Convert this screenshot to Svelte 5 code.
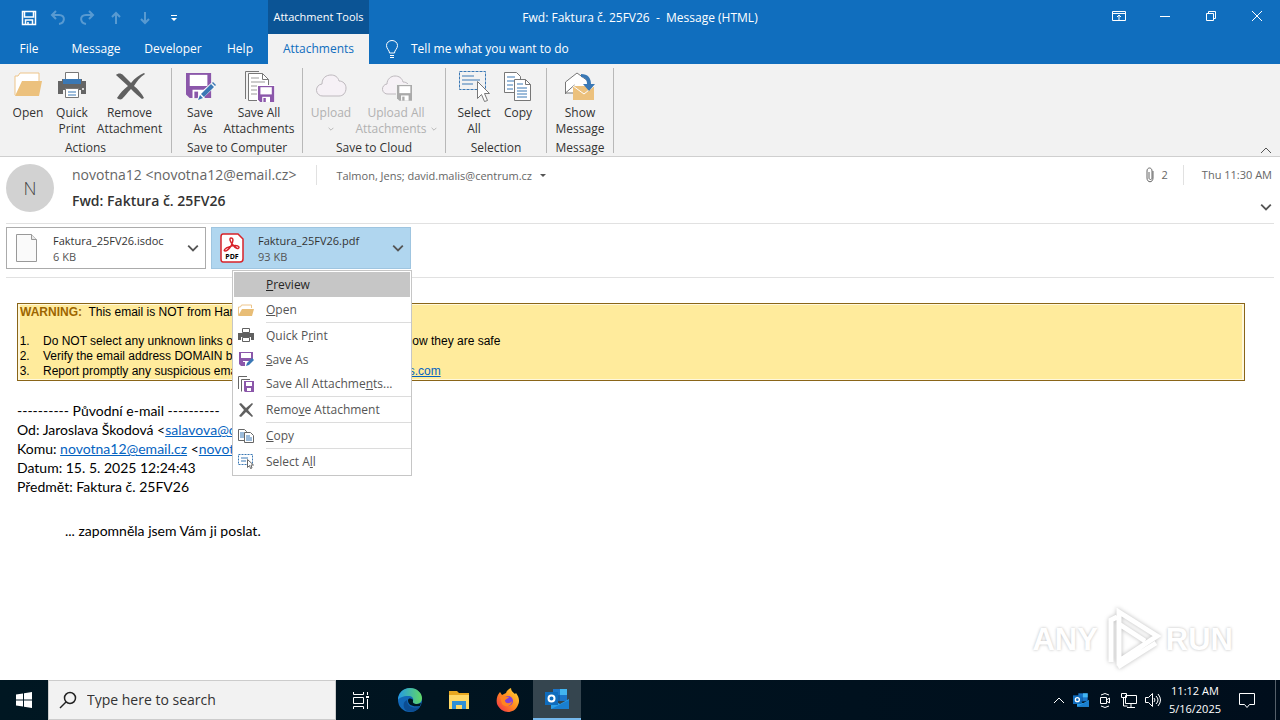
<script>
  const tabs = [
    { name: 'File', size: 'w58' },
    { name: 'Message', size: 'w76' },
    { name: 'Developer', size: 'w78' },
    { name: 'Help', size: 'w56' }
  ];

  const groups = [
    {
      title: 'Actions',
      buttons: [
        { icon: 'open', lines: ['Open'] },
        { icon: 'print', lines: ['Quick', 'Print'] },
        { icon: 'remove', lines: ['Remove', 'Attachment'], size: 'w71' }
      ]
    },
    {
      title: 'Save to Computer',
      buttons: [
        { icon: 'saveas', lines: ['Save', 'As'] },
        { icon: 'saveall', lines: ['Save All', 'Attachments'], size: 'w74' }
      ]
    },
    {
      title: 'Save to Cloud',
      buttons: [
        { icon: 'cloud', lines: ['Upload', ''], disabled: true },
        { icon: 'cloudall', lines: ['Upload All', 'Attachments '], size: 'w86', disabled: true }
      ]
    },
    {
      title: 'Selection',
      buttons: [
        { icon: 'select', lines: ['Select', 'All'] },
        { icon: 'copy', lines: ['Copy'] }
      ]
    },
    {
      title: 'Message',
      buttons: [{ icon: 'message', lines: ['Show', 'Message'], size: 'w54' }]
    }
  ];

  // label is split as [before, access key, after]
  const menu = [
    { label: ['', 'P', 'review'], active: true },
    { icon: 'open', label: ['', 'O', 'pen'], line: true },
    { icon: 'print', label: ['Quick P', 'r', 'int'] },
    { icon: 'saveas', label: ['', 'S', 'ave As'] },
    { icon: 'saveall', label: ['Save All Attachme', 'n', 'ts...'], line: true },
    { icon: 'remove', label: ['Remo', 'v', 'e Attachment'], line: true },
    { icon: 'copy', label: ['', 'C', 'opy'], line: true },
    { icon: 'select', label: ['Select A', 'l', 'l'] }
  ];

  let menuOpen = $state(true);
  let search = $state('');
</script>

{#snippet chevron(size)}
  <svg class={size} viewBox="0 0 10 10" aria-hidden="true">
    <path d="M1 3l4 4 4-4" fill="none" stroke="currentColor" stroke-width="1.5" />
  </svg>
{/snippet}

{#snippet floppy(fill)}
  <path d="M0 0h27v27H4l-4-4z" {fill} />
  <path d="M4 2h19v12H4z" fill="#fff" />
  <path d="M7 18h13v9H7z" fill="#fff" />
  <path d="M9 20h4v7H9z" {fill} />
{/snippet}

{#snippet icon(name)}
  <svg class="icon" viewBox="0 0 32 32" aria-hidden="true">
    {#if name === 'open'}
      <path d="M3 25V6h3l2-3h19v8" fill="#fff" stroke="#eec58a" />
      <path d="M3 26l7-15h20l-3 15z" fill="#ecc17d" />
    {:else if name === 'print'}
      <path d="M2 11h4V9h20v2h4v13h-5v-4H7v4H2z" fill="#656565" />
      <path d="M9.500 2.500h13v8h-13z" fill="#fff" stroke="#777" />
      <path d="M7 9h18v5H7z" fill="#3a78b5" />
      <path d="M9.500 18.500h13v9h-13z" fill="#fff" stroke="#777" />
      <path d="M12 22h8M12 25h8" stroke="#3a78b5" />
      <circle cx="27" cy="19" r="1" fill="#fff" />
    {:else if name === 'remove'}
      <path
        d="M2 5c2-2 5-2 7 0l8 8c4-5 8-8 13-10l1 1c-5 3-8 7-11 12 4 3 8 8 10 12l-2 1c-4-3-8-7-11-10-4 4-6 7-9 10-2 1-4 0-5-1 3-5 7-9 11-12-4-4-8-7-12-11z"
        fill="#606060"
      />
    {:else if name === 'saveas'}
      <g transform="translate(2 3) scale(0.930)">{@render floppy('#8b57aa')}</g>
      <path d="M13 30l2-6 12-11 4 4-12 11z" fill="#fff" />
      <path d="M14 30l2-5 3 3z" fill="#3a78b5" />
      <path d="M17 24l10-10 3 3-10 10z" fill="#3a78b5" />
      <path d="M28 13l1-1 3 3-1 1z" fill="#3a78b5" />
    {:else if name === 'saveall'}
      <path d="M2.500 29V1.500H16" fill="none" stroke="#777" />
      <path d="M5.500 30.500v-27h14l6 6v21z" fill="#fff" stroke="#777" />
      <path d="M19.500 3.500v6h6" fill="none" stroke="#777" />
      <path d="M8 8h8M8 12h14M8 16h8M8 20h6M8 24h6" stroke="#999" />
      <path d="M14 15h18v17H14z" fill="#fff" />
      <g transform="translate(15 16) scale(0.600)">{@render floppy('#8b57aa')}</g>
    {:else if name === 'cloud'}
      <path
        d="M8 26a6 6 0 0 1-1-12c0-6 4-9 9-9 4 0 7 2 8 6 4 0 7 3 7 7 0 5-3 8-7 8z"
        fill="#f6f1f6"
        stroke="#beb9be"
      />
    {:else if name === 'cloudall'}
      <path
        d="M8 24a5 5 0 0 1-1-10c0-5 4-8 8-8s7 2 8 6c4 0 7 3 7 7v5z"
        fill="#f6f1f6"
        stroke="#beb9be"
      />
      <path d="M16 14h17v18H16z" fill="#f2f2f2" />
      <g transform="translate(17 15) scale(0.580)">{@render floppy('#aaa')}</g>
    {:else if name === 'select'}
      <path d="M1.500 1.500h26v18h-26z" fill="none" stroke="#3a78b5" stroke-dasharray="3 1" />
      <path d="M4 6h12M4 10h18M4 14h11" stroke="#3a78b5" />
      <path d="M19.500 11.500v17l4-4 3 7 3-1-3-7h5z" fill="#fff" stroke="#777" />
    {:else if name === 'copy'}
      <path d="M2.500 2.500h12l4 4v16h-16z" fill="#fff" stroke="#777" />
      <path d="M5 7h8M5 11h8M5 15h6M5 19h6" stroke="#3a78b5" />
      <path d="M12.500 9.500h11l5 5v16h-16z" fill="#fff" stroke="#777" />
      <path d="M23.500 9.500v5h5" fill="none" stroke="#777" />
      <path d="M15 14h6M15 18h10M15 21h10M15 24h10M15 27h10" stroke="#3a78b5" />
    {:else if name === 'message'}
      <path d="M1.500 24V12L13 3l11 8v12H1.500l9-8" fill="#fff" stroke="#777" />
      <path d="M9 16h21v14H9z" fill="#ecc17d" />
      <path d="M9 16l11 8 10-8" fill="none" stroke="#fff" />
      <path d="M17 4c7 0 10 4 10 10h4l-6 7-6-7h4c0-4-2-7-6-7z" fill="#3a78b5" />
    {/if}
  </svg>
{/snippet}

{#snippet menuIcon(name)}
  <svg class="s16" viewBox="0 0 16 16" aria-hidden="true">
    {#if name === 'open'}
      <path d="M.5 13V5h2l1-2h10v3" fill="#fff" stroke="#eec58a" />
      <path d="M0 14l4-7h12l-2 7z" fill="#e8bd76" />
    {:else if name === 'print'}
      <path d="M0 6h16v7h-3v-3H3v3H0z" fill="#606060" />
      <path d="M4.500 1.500h7v4h-7zM4.500 10.500h7v4h-7z" fill="#fff" stroke="#606060" />
    {:else if name === 'saveas'}
      <path d="M1 1h14v14H3l-2-2z" fill="#8b57aa" />
      <path d="M3 2h10v5H3zM5 10h10v6H5z" fill="#fff" />
      <path d="M5 11h2v4H5z" fill="#8b57aa" />
      <path d="M8 15l1-3 5-5 2 2-5 5z" fill="#3a78b5" />
    {:else if name === 'saveall'}
      <path d="M.5 13V.5H9M3.500 15.500v-12H12" fill="none" stroke="#666" />
      <path d="M6 5h10v11H7l-1-1z" fill="#8b57aa" />
      <path d="M8 6h6v4H8zM9 12h4v3H9z" fill="#fff" />
    {:else if name === 'remove'}
      <path d="M1 2l2-1 5 5 6-5 1 1-5 6 5 6-1 1-6-5-5 5-2-1 5-6z" fill="#606060" />
    {:else if name === 'copy'}
      <path d="M.5 1.500h6l2 2v9h-8z" fill="#fff" stroke="#666" />
      <path d="M2 5h4M2 7h4M2 9h4" stroke="#3a78b5" />
      <path d="M6.500 4.500h6l3 3v7h-9z" fill="#fff" stroke="#666" />
      <path d="M8 8h4M8 10h6M8 12h6" stroke="#3a78b5" />
    {:else if name === 'select'}
      <path d="M.5 1.500h14v10H.5z" fill="none" stroke="#3a78b5" stroke-dasharray="2 1" />
      <path d="M3 5h7M3 8h5" stroke="#3a78b5" />
      <path d="M9.500 6.500v8l2-2 1 3 1.500-.5-1-3h2.500z" fill="#fff" stroke="#666" />
    {/if}
  </svg>
{/snippet}

{#snippet outlook(size)}
  <svg class={size} viewBox="0 0 24 24" aria-hidden="true">
    <path d="M8 2h14v12H8z" fill="#1b75c9" />
    <path d="M15 2h7v6h-7z" fill="#42b5f0" />
    <path d="M8 8h7v6H8z" fill="#1560a8" />
    <path d="M6 12l9 5 9-5v10H6z" fill="#2c9fe6" />
    <path d="M6 22l18-9v9z" fill="#1a7fd0" />
    <path d="M0 5h13v13H0z" fill="#0f6cbd" />
    <circle cx="6.500" cy="11.500" r="3" fill="none" stroke="#fff" stroke-width="2" />
  </svg>
{/snippet}

<div class="window">
  <header class="titlebar">
    <div class="quick">
      <button aria-label="Save">
        <svg class="s16" viewBox="0 0 16 16">
          <path d="M1.500 1.500h13v13h-13z M3.500 2v5h9V2 M4.500 14v-4h7v4 M7 12v2" fill="none" stroke="#fff" stroke-width="1.500" />
        </svg>
      </button>
      <button class="dim" aria-label="Undo">
        <svg class="s16" viewBox="0 0 16 16"><path d="M6 1L2 5l4 4M2 5h7c7 0 6 8 0 9" /></svg>
      </button>
      <button class="dim" aria-label="Redo">
        <svg class="s16" viewBox="0 0 16 16"><path d="M10 1l4 4-4 4M14 5H7c-7 0-6 8 0 9" /></svg>
      </button>
      <button class="dim" aria-label="Previous item">
        <svg class="s16" viewBox="0 0 16 16"><path d="M8 14V3M4 7l4-4 4 4" /></svg>
      </button>
      <button class="dim" aria-label="Next item">
        <svg class="s16" viewBox="0 0 16 16"><path d="M8 2v11M4 9l4 4 4-4" /></svg>
      </button>
      <button aria-label="Customize toolbar">
        <svg class="s16" viewBox="0 0 16 16"><path d="M5 5h6v1H5zM5 8h6l-3 3z" fill="#fff" /></svg>
      </button>
    </div>
    <div class="context">Attachment Tools</div>
    <h1>Fwd: Faktura č. 25FV26 &nbsp;-&nbsp; Message (HTML)</h1>
    <div class="controls">
      <button aria-label="Ribbon display options">
        <svg class="s14" viewBox="0 0 14 14"><path d="M.5 2.500h13v9H.5zM.5 4.500h13M7 11V6M5 8l2-2 2 2" /></svg>
      </button>
      <button aria-label="Minimize">
        <svg class="s14" viewBox="0 0 14 14"><path d="M2 7.500h10" /></svg>
      </button>
      <button aria-label="Restore">
        <svg class="s14" viewBox="0 0 14 14"><path d="M2.500 4.500h7v7h-7zM4.500 4V2.500h7v7H10" /></svg>
      </button>
      <button aria-label="Close">
        <svg class="s14" viewBox="0 0 14 14"><path d="M2 2l10 10M12 2L2 12" /></svg>
      </button>
    </div>
  </header>

  <nav class="tabs">
    {#each tabs as tab (tab.name)}
      <button class={tab.size}>{tab.name}</button>
    {/each}
    <button class="w101 current">Attachments</button>
    <button class="tell">
      <svg class="s18" viewBox="0 0 18 18" aria-hidden="true">
        <path d="M6.500 13c0-3-3-4-3-7.500a5.500 5 0 0 1 11 0c0 3.500-3 4.500-3 7.500zM7 15.500h4M7 17.500h4" />
      </svg>
      Tell me what you want to do
    </button>
  </nav>

  <section class="ribbon" aria-label="Attachments">
    {#each groups as group (group.title)}
      <div class="group">
        <div class="buttons">
          {#each group.buttons as b (b.icon)}
            <button class={b.size || 'w44'} disabled={b.disabled}>
              {@render icon(b.icon)}
              {#each b.lines as line, i}
                <span>
                  {line}{#if b.disabled && i === 1}{@render chevron('s6')}{/if}
                </span>
              {/each}
            </button>
          {/each}
        </div>
        <div class="title">{group.title}</div>
      </div>
    {/each}
    <button class="collapse" aria-label="Collapse the ribbon">
      <svg class="s12" viewBox="0 0 12 12"><path d="M1 9l5-5 5 5" fill="none" stroke="#555" /></svg>
    </button>
  </section>

  <main>
    <section class="head">
      <div class="avatar">N</div>
      <div class="who">
        <div class="line">
          <span class="sender">novotna12 &lt;novotna12@email.cz&gt;</span>
          <span class="to">Talmon, Jens; david.malis@centrum.cz</span>
          <svg class="s6" viewBox="0 0 6 6"><path d="M0 2h6L3 5z" fill="#555" /></svg>
        </div>
        <h2>Fwd: Faktura č. 25FV26</h2>
      </div>
      <div class="meta">
        <div class="line">
          <svg class="s16" viewBox="0 0 16 16">
            <path d="M11 4v7c0 5-6 5-6 0V4c0-4 5-4 5 0v7c0 2-3 2-3 0V5" fill="none" stroke="#666" />
          </svg>
          <span>2</span>
          <time>Thu 11:30 AM</time>
        </div>
        <button aria-label="Expand header">{@render chevron('s12')}</button>
      </div>
    </section>

    <section class="files">
      <div class="file">
        <svg class="page" viewBox="0 0 24 32" aria-hidden="true">
          <path d="M1.500 2.500h15l5 5v22h-20z" fill="#fafafa" stroke="#999" />
          <path d="M16.500 2.500v5h5" fill="#e8e8e8" stroke="#999" />
        </svg>
        <div class="name">Faktura_25FV26.isdoc<small>6 KB</small></div>
        <button aria-label="Attachment options">{@render chevron('s12')}</button>
      </div>
      <div class="file selected">
        <svg class="page" viewBox="0 0 24 32" aria-hidden="true">
          <path d="M3 2h15l5 5v20q0 3-3 3H3q-2 0-2-3V5q0-3 2-3z" fill="#fff" stroke="#d8232a" stroke-width="1.500" />
          <path
            d="M11 6c3 0 2 4 0 8-2 3-4 5-6 5s0-3 4-4c4-2 9-2 10 0 0 3-4 1-6-2-3-3-4-7-2-7z"
            fill="none"
            stroke="#d8232a"
            stroke-width="1.500"
          />
          <text x="12" y="27" text-anchor="middle">PDF</text>
        </svg>
        <div class="name">Faktura_25FV26.pdf<small>93 KB</small></div>
        <button aria-label="Attachment options" onclick={() => (menuOpen = !menuOpen)}>
          {@render chevron('s12')}
        </button>
        {#if menuOpen}
          <div class="menu" role="menu">
            {#each menu as item}
              <button role="menuitem" class:active={item.active} class:ruled={item.line}>
                {@render menuIcon(item.icon)}
                <span>{item.label[0]}<u>{item.label[1]}</u>{item.label[2]}</span>
              </button>
            {/each}
          </div>
        {/if}
      </div>
    </section>

    <article>
      <div class="warning">
        <div class="inner">
          <p><b>WARNING:</b>&nbsp; This email is NOT from Hanover staff.</p>
          <ol>
            <li>Do NOT select any unknown links or open attachments unless you know they are safe</li>
            <li>Verify the email address DOMAIN before replying</li>
            <li>Report promptly any suspicious emails to <a href="#report">reporting@security-contacts.com</a></li>
          </ol>
        </div>
      </div>
      <div class="original">
        <p>---------- Původní e-mail ----------</p>
        <p>Od: Jaroslava Škodová &lt;<a href="#from">salavova@centrum.cz</a>&gt;</p>
        <p>Komu: <a href="#to">novotna12@email.cz</a> &lt;<a href="#to">novotna12@email.cz</a>&gt;</p>
        <p>Datum: 15. 5. 2025 12:24:43</p>
        <p>Předmět: Faktura č. 25FV26</p>
        <p class="note">... zapomněla jsem Vám ji poslat.</p>
      </div>
    </article>

    <div class="watermark">
      <span>ANY</span>
      <svg viewBox="0 0 60 64" aria-hidden="true">
        <path d="M9 54V12l6-3M17 4l38 24-38 25zM17 16l26 17M16 59l38-24" />
      </svg>
      <span>RUN</span>
    </div>
  </main>

  <footer class="taskbar">
    <button class="start" aria-label="Start">
      <svg class="s16" viewBox="0 0 16 16">
        <path d="M0 2.500L7 1.500v6H0zM8 1.300L16 0v7.500H8zM0 8.500h7v6l-7-1zM8 8.500h8V16l-8-1.300z" fill="#fff" />
      </svg>
    </button>
    <label class="search">
      <svg class="s18" viewBox="0 0 18 18" aria-hidden="true">
        <circle cx="11" cy="7" r="5.500" /><path d="M7 11l-6 6" />
      </svg>
      <input type="text" placeholder="Type here to search" aria-label="Type here to search" bind:value={search} />
    </label>
    <div class="apps">
      <button class="app" aria-label="Task View">
        <svg class="s18" viewBox="0 0 18 18" fill="none" stroke="#fff">
          <path d="M1.500 1v2.500h10V1M1.500 6.500h10v6h-10zM1.500 18v-2.500h10V18M15.500 1v3M15.500 8v10" />
          <path d="M14 5h3v2h-3z" fill="#fff" stroke="none" />
        </svg>
      </button>
      <button class="app" aria-label="Edge">
        <svg class="s24" viewBox="0 0 24 24">
          <defs>
            <linearGradient id="edge" x1="0" x2="1"><stop stop-color="#2499e4" /><stop offset="1" stop-color="#62d866" /></linearGradient>
          </defs>
          <circle cx="12" cy="12" r="12" fill="#1268b8" />
          <path d="M0 12C0 5 5 0 12 0s12 5 12 10c0 4-3 6-6 6s-4-1-3-3c1-3-1-5-5-5-5 0-9 2-10 4z" fill="url(#edge)" />
          <path d="M9 12c0 6 5 9 13 7-3 4-8 6-13 4-4-2-5-9 0-11z" fill="#0c4d93" />
          <path d="M10 12c0 5 4 7 12 6l1-3c-4 2-9 1-8-2 1-2-4-4-5-1z" fill="#001722" />
        </svg>
      </button>
      <button class="app" aria-label="File Explorer">
        <svg class="s24" viewBox="0 0 24 24">
          <path d="M2 3h8l2 2h10v16H2z" fill="#e8a820" />
          <path d="M2 7h20v14H2z" fill="#ffd866" />
          <path d="M5 21v-8h14v8h-4v-4H9v4z" fill="#2f8fd6" />
        </svg>
      </button>
      <button class="app" aria-label="Firefox">
        <svg class="s24" viewBox="0 0 24 24">
          <defs>
            <linearGradient id="fox" x1="1" x2="0" y2="1"><stop stop-color="#ffe03a" /><stop offset=".5" stop-color="#ff8a1e" /><stop offset="1" stop-color="#f0264f" /></linearGradient>
          </defs>
          <path d="M4 4l2 3 4-2c1-3 3-4 5-5 0 3 2 4 4 6l1-1c3 4 4 8 2 12-2 5-6 7-10 7S3 21 1 16c-1-4 0-9 3-12z" fill="url(#fox)" />
          <circle cx="12" cy="13" r="5" fill="#8040d8" />
          <path d="M4 9c4-2 6 0 9 0-1 2-4 2-4 4 1 3 5 3 7 0 0 5-7 7-10 3z" fill="#ff8420" />
        </svg>
      </button>
      <button class="app running" aria-label="Outlook">{@render outlook('s24')}</button>
    </div>
    <div class="tray">
      <svg class="s12" viewBox="0 0 12 12"><path d="M1 9l5-5 5 5" /></svg>
      {@render outlook('s16')}
      <svg class="s16" viewBox="0 0 16 16"><path d="M3.500 5.500h6v6h-6zM9.500 8l3-2v5l-3-2M4 3q4-3 8 0M4 14q4 3 8 0" /></svg>
      <svg class="s16" viewBox="0 0 16 16"><path d="M4.500 3.500h11v8h-11zM10 12v3M6 15.500h8M.5 1.500h5v4h-5zM2.500 6v8h4" /></svg>
      <svg class="s16" viewBox="0 0 16 16"><path d="M.5 5.500h3l4-4v13l-4-4h-3zM9 6q2 2 0 4M11 4q4 4 0 8M13 2q5 6 0 12" /></svg>
      <div class="clock"><span>11:12 AM</span><span>5/16/2025</span></div>
      <svg class="s18" viewBox="0 0 18 18"><path d="M1.500 2.500h15v11h-5l-2.500 3-2.500-3h-5z" /></svg>
    </div>
    <button class="desktop" aria-label="Show desktop"></button>
  </footer>
</div>

<style>
  :global(body) {
    margin: 0;
    background: #fff;
  }

  .window {
    display: flex;
    flex-direction: column;
    min-height: 100vh;
    font-family: 'Open Sans', 'Noto Sans', sans-serif;
    font-size: 12px;
    line-height: 16px;
    color: #333;
  }

  button {
    padding: 0;
    border: 0;
    background: none;
    font: inherit;
    color: inherit;
  }

  svg {
    display: block;
    flex: none;
  }

  p,
  h1,
  h2,
  ol {
    margin: 0;
    font-size: 12px;
    font-weight: 400;
  }

  .s6 { width: 6px; height: 6px; }
  .s12 { width: 12px; height: 12px; }
  .s14 { width: 14px; height: 14px; }
  .s16 { width: 16px; height: 16px; }
  .s18 { width: 18px; height: 18px; }
  .s24 { width: 24px; height: 24px; }

  .w44 { width: 44px; }
  .w54 { width: 54px; }
  .w56 { width: 56px; }
  .w58 { width: 58px; }
  .w71 { width: 71px; }
  .w74 { width: 74px; }
  .w76 { width: 76px; }
  .w78 { width: 78px; }
  .w86 { width: 86px; }
  .w101 { width: 101px; }

  /* title bar and tabs */
  .titlebar {
    display: grid;
    grid-template-columns: 268px 101px 1fr 369px;
    height: 34px;
    background: #106ebe;
    color: #fff;
  }

  .quick {
    display: flex;
    align-items: center;
    gap: 13px;
    padding-left: 21px;
  }

  .dim {
    opacity: 0.3;
  }

  .dim path,
  .controls path,
  .tell path {
    fill: none;
    stroke: #fff;
  }

  .dim path {
    stroke-width: 2;
  }

  .context {
    background: #0b5495;
    font-size: 11px;
    line-height: 34px;
    text-align: center;
  }

  h1 {
    line-height: 36px;
    text-align: center;
  }

  .controls {
    display: flex;
    justify-content: flex-end;
    align-items: center;
  }

  .controls button {
    display: flex;
    justify-content: center;
    width: 46px;
    padding-bottom: 4px;
  }

  .tabs {
    display: flex;
    height: 30px;
    background: #106ebe;
    color: #fff;
  }

  .current {
    background: #f2f2f2;
    color: #106ebe;
  }

  .tell {
    display: flex;
    align-items: center;
    gap: 10px;
    padding-left: 14px;
  }

  /* ribbon */
  .ribbon {
    display: flex;
    height: 92px;
    border-bottom: 1px solid #cfcfcf;
    background: #f2f2f2;
  }

  .group {
    margin: 4px 0 3px;
    padding: 2px 6px 0;
    border-right: 1px solid #b8b8b8;
  }

  .buttons {
    display: flex;
    justify-content: center;
    height: 70px;
  }

  .buttons button {
    display: flex;
    flex-direction: column;
    align-items: center;
    white-space: nowrap;
  }

  .buttons button:disabled {
    color: #b1b1b1;
  }

  .buttons span {
    display: flex;
    align-items: center;
    gap: 4px;
    height: 16px;
  }

  .icon {
    width: 32px;
    height: 32px;
    margin-bottom: 3px;
  }

  .title {
    text-align: center;
    white-space: nowrap;
  }

  .collapse {
    align-self: flex-end;
    margin-left: auto;
    padding: 0 8px 0 0;
  }

  /* message */
  main {
    position: relative;
    flex: 1;
    padding: 0 6px;
  }

  .head {
    display: flex;
    gap: 18px;
    height: 59px;
    padding-top: 7px;
    border-bottom: 1px solid #e1e1e1;
  }

  .avatar {
    width: 48px;
    height: 48px;
    border-radius: 50%;
    background: #d2d2d2;
    color: #444;
    font-size: 18px;
    font-weight: 300;
    line-height: 48px;
    text-align: center;
  }

  .line {
    display: flex;
    align-items: center;
    height: 22px;
    color: #666;
  }

  .sender {
    padding-right: 20px;
    border-right: 1px solid #e1e1e1;
    font-size: 14px;
    line-height: 20px;
  }

  .to {
    padding: 2px 8px 0 19px;
    font-size: 11px;
  }

  h2 {
    padding-top: 4px;
    font-size: 14px;
    font-weight: 600;
    line-height: 22px;
  }

  .meta {
    display: flex;
    flex-direction: column;
    align-items: flex-end;
    justify-content: space-between;
    margin-left: auto;
    padding: 0 2px 10px 0;
    color: #555;
    font-size: 11px;
  }

  .meta .line {
    gap: 4px;
  }

  .meta span {
    padding-right: 15px;
    border-right: 1px solid #e1e1e1;
    line-height: 20px;
  }

  time {
    padding-left: 14px;
  }

  .files {
    display: flex;
    gap: 5px;
    height: 50px;
    padding-top: 3px;
    border-bottom: 1px solid #e1e1e1;
  }

  .file {
    position: relative;
    box-sizing: border-box;
    display: flex;
    align-items: center;
    width: 200px;
    height: 42px;
    padding: 0 6px 0 8px;
    border: 1px solid #ababab;
  }

  .file > button {
    color: #555;
  }

  .selected {
    border-color: #9fc5e0;
    background: #b0d6ef;
  }

  .page {
    width: 24px;
    height: 32px;
    margin-right: 14px;
  }

  .page text {
    font-size: 7px;
    font-weight: 700;
  }

  .name {
    flex: 1;
    padding-top: 1px;
    font-size: 11px;
  }

  small {
    display: block;
    font-size: 11px;
    color: #555;
  }

  .menu {
    position: absolute;
    top: 42px;
    left: 20px;
    z-index: 2;
    display: flex;
    flex-direction: column;
    width: 178px;
    padding: 1px 0 2px;
    border: 1px solid #c6c6c6;
    background: #fff;
    color: #555;
  }

  .menu button {
    display: flex;
    align-items: center;
    gap: 12px;
    height: 24px;
    padding-left: 5px;
    text-align: left;
  }

  .menu span {
    flex: 1;
    padding-top: 1px;
    line-height: 24px;
  }

  .menu .ruled {
    height: 26px;
  }

  .menu .ruled span {
    padding-top: 0;
    border-bottom: 1px solid #dcdcdc;
    line-height: 25px;
  }

  .menu .active {
    height: 25px;
    margin: 0 1px;
    padding-left: 4px;
    background: #c6c6c6;
    color: #262626;
  }

  .menu .active span {
    padding-top: 0;
  }

  article {
    padding: 25px 29px 0 11px;
    color: #000;
  }

  a {
    color: #0563c1;
  }

  .warning {
    padding: 1px 2px;
    border: 1px solid #8a6518;
    background: #fff8dc;
    font: 12px/15px 'Liberation Sans', Arial, sans-serif;
  }

  .inner {
    background: #ffeb9c;
  }

  .warning b {
    color: #9c6500;
  }

  ol {
    padding: 14px 0 0 23px;
  }

  li::marker {
    content: counter(list-item) '.    ';
  }

  .original {
    padding-top: 20px;
    font-family: Lato, Carlito, sans-serif;
  }

  .original p {
    font-size: 14px;
    line-height: 19px;
  }

  .original .note {
    padding: 25px 0 0 48px;
  }

  .watermark {
    position: absolute;
    right: 47px;
    bottom: 8px;
    display: flex;
    align-items: center;
    gap: 4px;
    color: #fff;
    font: 700 31px/64px 'Liberation Sans Narrow', 'Liberation Sans', sans-serif;
    text-shadow: 0 0 3px #bbb;
  }

  .watermark svg {
    width: 60px;
    height: 64px;
    filter: drop-shadow(0 0 2px #bbb);
  }

  .watermark path {
    fill: none;
    stroke: #fff;
    stroke-width: 5;
  }

  /* taskbar */
  .taskbar {
    display: flex;
    height: 40px;
    background: linear-gradient(90deg, #001722, #000e1c);
    color: #fff;
  }

  .start {
    display: flex;
    align-items: center;
    justify-content: center;
    width: 48px;
  }

  .search {
    box-sizing: border-box;
    display: flex;
    align-items: center;
    gap: 10px;
    width: 288px;
    padding-left: 10px;
    border: 1px solid #ccc;
    background: #f2f2f2;
  }

  .search svg {
    fill: none;
    stroke: #222;
    stroke-width: 1.5;
  }

  input {
    flex: 1;
    min-width: 0;
    padding: 0;
    border: 0;
    outline: 0;
    background: none;
    font: inherit;
    font-size: 14px;
  }

  input::placeholder {
    color: #333;
    opacity: 1;
  }

  .apps {
    display: flex;
    gap: 1px;
    padding-left: 1px;
  }

  .app {
    box-sizing: border-box;
    display: flex;
    align-items: center;
    justify-content: center;
    width: 48px;
  }

  .running {
    border-bottom: 2px solid #76b9ed;
    background: #35454f;
  }

  .tray {
    display: flex;
    align-items: center;
    gap: 8px;
    margin-left: auto;
    padding-right: 19px;
  }

  .tray > svg:not(:nth-child(2)) {
    fill: none;
    stroke: #fff;
  }

  .clock {
    display: flex;
    flex-direction: column;
    font-size: 11px;
    line-height: 18px;
    text-align: center;
  }

  .clock + svg {
    margin-left: 9px;
  }

  .desktop {
    width: 5px;
    border-left: 1px solid #55606a;
  }
</style>
